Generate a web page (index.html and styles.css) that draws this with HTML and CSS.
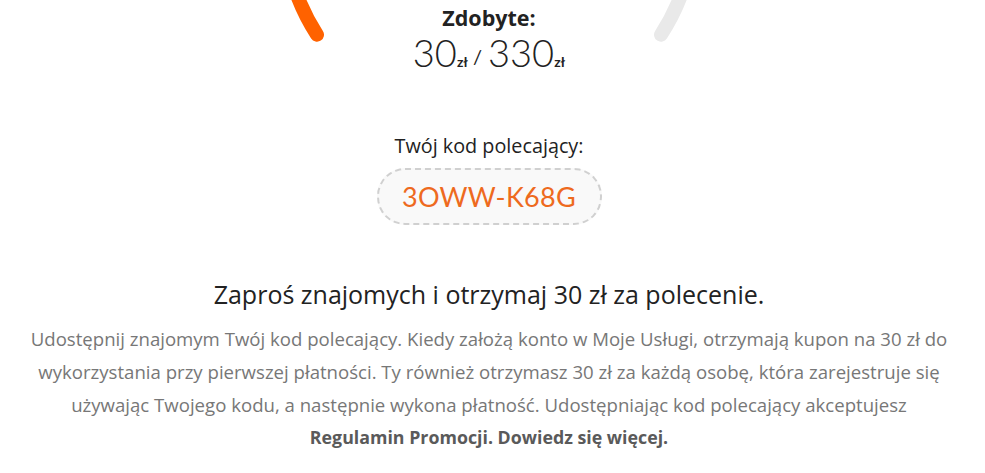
FILE: index.html
```html
<!DOCTYPE html>
<html>
  <head>
    <title>Polecenia</title>
    <link rel="stylesheet" href="styles.css">
  </head>
  <body>
    <div class="page">
      <div class="gauge">
        <svg class="gauge-ring" width="430" height="430" viewBox="0 0 430 430">
          <path d="M13.8 254.1 A205 205 0 1 1 387 326.7" fill="none" stroke="#e9e9e9" stroke-width="14" stroke-linecap="round"/>
          <path d="M43 326.7 A205 205 0 0 1 13.8 254.1" fill="none" stroke="#ff6200" stroke-width="14" stroke-linecap="round"/>
        </svg>
        <div class="earned-label">Zdobyte:</div>
        <div class="earned-value">30<span class="currency">zł</span><span class="slash">/</span>330<span class="currency">zł</span></div>
      </div>

      <div class="code-label">Twój kod polecający:</div>
      <div class="code-box">3OWW-K68G</div>

      <h2 class="invite-title">Zaproś znajomych i otrzymaj 30 zł za polecenie.</h2>
      <p class="invite-text">
        Udostępnij znajomym Twój kod polecający. Kiedy założą konto w Moje Usługi, otrzymają kupon na 30 zł do
        wykorzystania przy pierwszej płatności. Ty również otrzymasz 30 zł za każdą osobę, która zarejestruje się
        używając Twojego kodu, a następnie wykona płatność. Udostępniając kod polecający akceptujesz
        <span class="links"><a class="link" href="#">Regulamin Promocji.</a> <a class="link" href="#">Dowiedz się więcej.</a></span>
      </p>
    </div>
  </body>
</html>
```

FILE: styles.css
```css
body {
  margin: 0;
  background-color: #fff;
  font-family: "Open Sans", Lato, sans-serif;
  color: #222;
  overflow: hidden;
}

.page {
  display: flex;
  flex-direction: column;
  align-items: center;
  padding-right: 7px;
}

.gauge {
  position: relative;
  width: 430px;
  height: 80px;
  display: flex;
  flex-direction: column;
  align-items: center;
  padding-top: 4px;
  box-sizing: border-box;
}

.gauge-ring {
  position: absolute;
  left: 0;
  top: -292px;
}

.earned-label {
  position: relative;
  font-size: 21.5px;
  font-weight: 700;
  line-height: 28px;
  color: #222;
}

.earned-value {
  position: relative;
  font-family: Lato, sans-serif;
  font-size: 38px;
  font-weight: 300;
  line-height: 40px;
  color: #222;
}

.currency {
  font-size: 14px;
  font-weight: 700;
}

.slash {
  margin: 0 6px 0 5px;
  font-size: 20px;
  font-weight: 400;
  vertical-align: 3px;
}

.code-label {
  margin-top: 52px;
  font-size: 19.8px;
  line-height: 28px;
  color: #222;
}

.code-box {
  margin-top: 8px;
  width: 225px;
  height: 57px;
  box-sizing: border-box;
  display: flex;
  justify-content: center;
  align-items: center;
  border: 2px dashed #d0d0d0;
  border-radius: 28px;
  background-color: #f9f9f9;
  color: #ee6a1e;
  font-family: Lato, sans-serif;
  font-size: 27px;
  letter-spacing: 0.3px;
}

.invite-title {
  margin: 52px 0 0;
  font-size: 25px;
  font-weight: 400;
  line-height: 34px;
  color: #222;
}

.invite-text {
  margin: 11px 0 0;
  width: 950px;
  text-align: center;
  font-size: 18.6px;
  line-height: 33px;
  color: #777;
}

.links {
  display: block;
  font-size: 17.8px;
}

.link {
  color: #5a5a5a;
  font-weight: 700;
  text-decoration: none;
}
```
